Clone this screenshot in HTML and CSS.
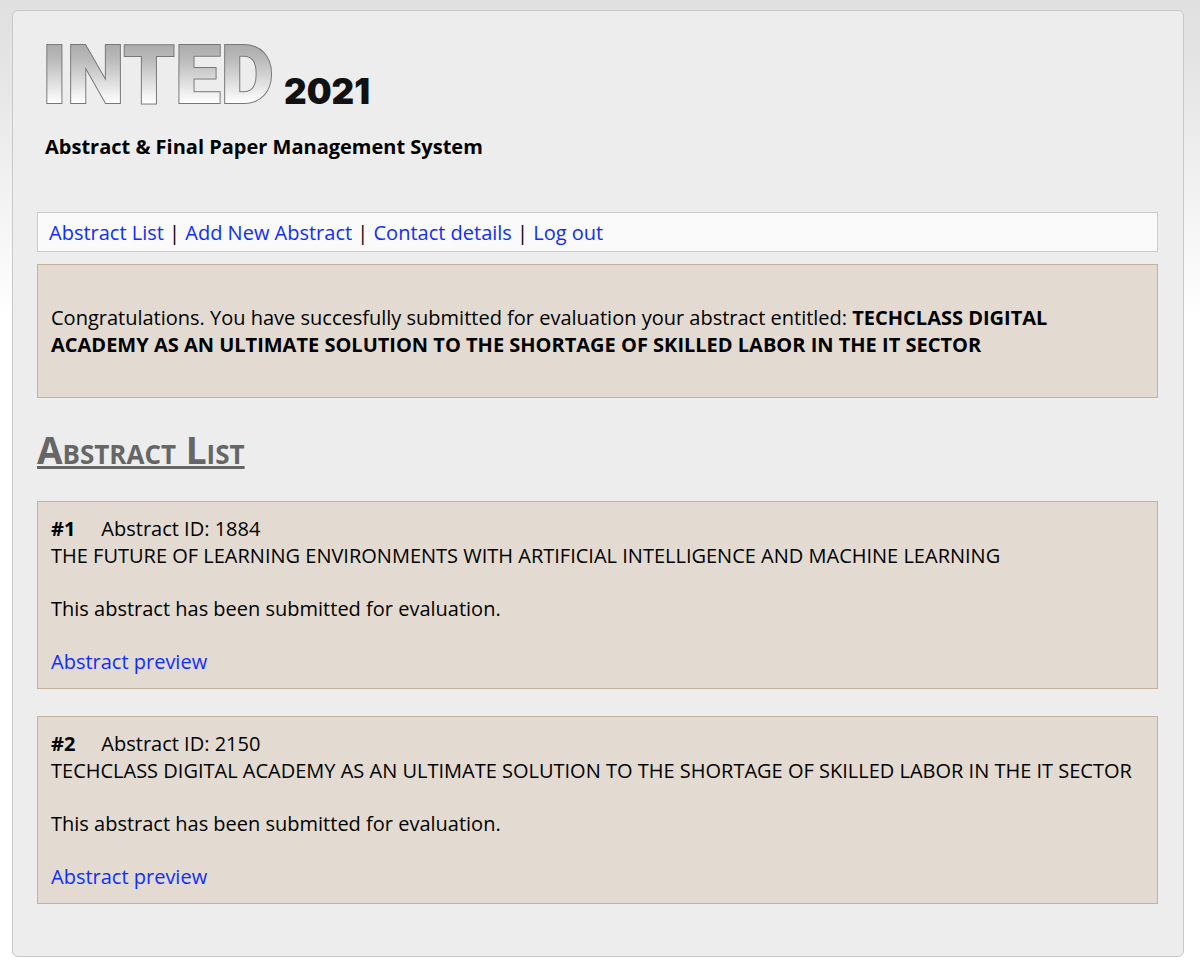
FILE: index.html
```html
<!DOCTYPE html>
<html lang="en">
<head>
<meta charset="utf-8">
<meta name="viewport" content="width=device-width, initial-scale=1">
<title>INTED 2021</title>
<link rel="stylesheet" href="styles.css">
</head>
<body>
<div class="page">
  <header class="header">
    <svg class="logo" width="340" height="64" viewBox="0 0 340 64" role="img" aria-label="INTED 2021">
      <defs>
        <linearGradient id="metal" gradientUnits="userSpaceOnUse" x1="0" y1="2" x2="0" y2="60">
          <stop offset="0" stop-color="#acacac"/>
          <stop offset="0.25" stop-color="#bababa"/>
          <stop offset="1" stop-color="#ffffff"/>
        </linearGradient>
      </defs>
      <text class="logo-name" x="-3" y="60">INTED</text>
      <text class="logo-year" x="239" y="61">2021</text>
    </svg>
    <p class="tagline">Abstract &amp; Final Paper Management System</p>
  </header>
  <nav class="menu">
    <a href="#list">Abstract List</a> | <a href="#add">Add New Abstract</a> | <a href="#contact">Contact details</a> | <a href="#logout">Log out</a>
  </nav>
  <main>
    <div class="box notice">
      <p>Congratulations. You have succesfully submitted for evaluation your abstract entitled: <strong>TECHCLASS DIGITAL ACADEMY AS AN ULTIMATE SOLUTION TO THE SHORTAGE OF SKILLED LABOR IN THE IT SECTOR</strong></p>
    </div>
    <h1 class="heading" id="list">Abstract List</h1>
    <article class="box abstract">
      <div>
        <p class="ident"><strong>#1</strong><span>Abstract ID: 1884</span></p>
        <p>THE FUTURE OF LEARNING ENVIRONMENTS WITH ARTIFICIAL INTELLIGENCE AND MACHINE LEARNING</p>
      </div>
      <p>This abstract has been submitted for evaluation.</p>
      <p><a href="#preview-1884">Abstract preview</a></p>
    </article>
    <article class="box abstract">
      <div>
        <p class="ident"><strong>#2</strong><span>Abstract ID: 2150</span></p>
        <p>TECHCLASS DIGITAL ACADEMY AS AN ULTIMATE SOLUTION TO THE SHORTAGE OF SKILLED LABOR IN THE IT SECTOR</p>
      </div>
      <p>This abstract has been submitted for evaluation.</p>
      <p><a href="#preview-2150">Abstract preview</a></p>
    </article>
  </main>
</div>
</body>
</html>
```
FILE: styles.css
```css
* {
  box-sizing: border-box;
}

body {
  margin: 0;
  padding: 10px 16px 11px 12px;
  background: #fff linear-gradient(#e0e0e0, #e3e3e3 50px, #fff 320px) no-repeat;
  color: #000;
  font: 20px/27px "Open Sans", "Noto Sans", sans-serif;
}

p {
  margin: 0;
}

a {
  color: #0f2dff;
  text-decoration: none;
}

a:hover {
  text-decoration: underline;
}

.page {
  padding: 32px 25px 52px 24px;
  border: 1px solid #c8c8c8;
  border-radius: 6px;
  background: #ededed;
}

.header {
  padding: 0 8px;
}

.logo {
  display: block;
  overflow: visible;
}

.logo-name {
  fill: url(#metal);
  stroke: #777;
  stroke-width: 2px;
  paint-order: stroke;
  font: 900 82px Roboto, Arial, sans-serif;
}

.logo-year {
  fill: #111;
  font: 900 35px Inter, "Liberation Sans", sans-serif;
}

.tagline {
  padding: 26px 0 52px;
  font-weight: bold;
}

.menu {
  padding: 6px 11px 5px;
  border: 1px solid #ccc;
  background: #fafafa;
}

.box {
  padding: 13px;
  border: 1px solid #c4b299;
  background: #e3dbd1;
}

.notice {
  margin-top: 12px;
  padding: 39px 13px;
}

.heading {
  margin: 24px 0;
  color: #666;
  font-size: 37px;
  line-height: 55px;
  font-variant: small-caps;
  text-decoration: underline;
}

.abstract {
  display: flex;
  flex-direction: column;
  gap: 26px;
}

.abstract + .abstract {
  margin-top: 27px;
}

.ident {
  display: flex;
  gap: 26px;
}
```
